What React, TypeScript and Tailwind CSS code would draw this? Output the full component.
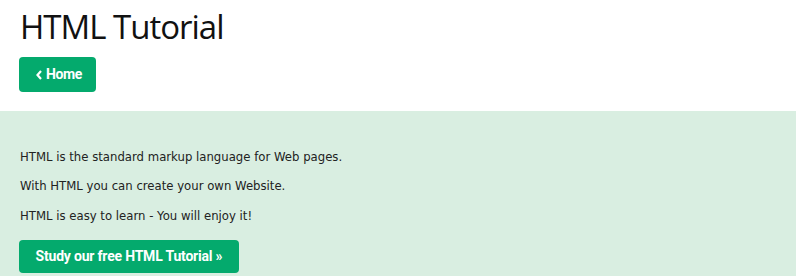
import React from 'react';

const App: React.FC = () => {
  return (
    <div className="w-[800px] h-[279px] bg-white overflow-hidden">
      <div className="pl-[20px] pt-[5px] h-[111px]">
        <h1 className="text-[33px] leading-[44px] text-[#111] font-['Open_Sans',sans-serif] tracking-[-1px]">
          HTML Tutorial
        </h1>
        <a
          href="#"
          className="mt-[8px] -ml-[1px] flex items-center w-[77px] h-[35px] rounded-[4px] bg-[#04AA6D] text-white font-['Roboto',sans-serif] font-bold text-[14px] tracking-[-0.4px] pl-[17px]"
        >
          <svg width="6" height="10" viewBox="0 0 6 10" className="mr-[4px]">
            <path d="M5 1 L1.5 5 L5 9" stroke="white" strokeWidth="2.2" fill="none" />
          </svg>
          Home
        </a>
      </div>
      <div className="w-[796px] h-[165px] bg-[#D9EEE1] pl-[19px] pt-[36px] font-['DejaVu_Sans',sans-serif] text-[11.7px] text-[#222]">
        <p className="leading-[20px] pl-[1px]">HTML is the standard markup language for Web pages.</p>
        <p className="leading-[20px] mt-[9px] pl-[1px]">With HTML you can create your own Website.</p>
        <p className="leading-[20px] mt-[10px] pl-[1px]">HTML is easy to learn - You will enjoy it!</p>
        <a
          href="#"
          className="mt-[14px] flex items-center justify-center w-[220px] h-[33px] rounded-[4px] bg-[#04AA6D] text-white font-['Roboto',sans-serif] font-bold text-[14px] tracking-[-0.2px]"
        >
          Study our free HTML Tutorial »
        </a>
      </div>
    </div>
  );
};

export default App;
